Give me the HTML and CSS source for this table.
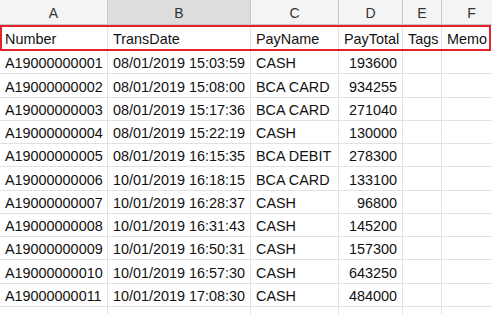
FILE: index.html
```html
<!DOCTYPE html>
<html>
<head>
<meta charset="utf-8">
<link rel="stylesheet" href="styles.css">
</head>
<body>
<div class="sheet">
  <div class="grid">
    <div class="ch">A</div><div class="ch sel">B</div><div class="ch">C</div><div class="ch">D</div><div class="ch">E</div><div class="ch">F</div>

    <div class="c r1">Number</div><div class="c r1">TransDate</div><div class="c r1">PayName</div><div class="c r1">PayTotal</div><div class="c r1">Tags</div><div class="c r1">Memo</div>

    <div class="c">A19000000001</div><div class="c">08/01/2019 15:03:59</div><div class="c">CASH</div><div class="c num">193600</div><div class="c"></div><div class="c"></div>
    <div class="c">A19000000002</div><div class="c">08/01/2019 15:08:00</div><div class="c">BCA CARD</div><div class="c num">934255</div><div class="c"></div><div class="c"></div>
    <div class="c">A19000000003</div><div class="c">08/01/2019 15:17:36</div><div class="c">BCA CARD</div><div class="c num">271040</div><div class="c"></div><div class="c"></div>
    <div class="c">A19000000004</div><div class="c">08/01/2019 15:22:19</div><div class="c">CASH</div><div class="c num">130000</div><div class="c"></div><div class="c"></div>
    <div class="c">A19000000005</div><div class="c">08/01/2019 16:15:35</div><div class="c">BCA DEBIT</div><div class="c num">278300</div><div class="c"></div><div class="c"></div>
    <div class="c">A19000000006</div><div class="c">10/01/2019 16:18:15</div><div class="c">BCA CARD</div><div class="c num">133100</div><div class="c"></div><div class="c"></div>
    <div class="c">A19000000007</div><div class="c">10/01/2019 16:28:37</div><div class="c">CASH</div><div class="c num">96800</div><div class="c"></div><div class="c"></div>
    <div class="c">A19000000008</div><div class="c">10/01/2019 16:31:43</div><div class="c">CASH</div><div class="c num">145200</div><div class="c"></div><div class="c"></div>
    <div class="c">A19000000009</div><div class="c">10/01/2019 16:50:31</div><div class="c">CASH</div><div class="c num">157300</div><div class="c"></div><div class="c"></div>
    <div class="c">A19000000010</div><div class="c">10/01/2019 16:57:30</div><div class="c">CASH</div><div class="c num">643250</div><div class="c"></div><div class="c"></div>
    <div class="c">A19000000011</div><div class="c">10/01/2019 17:08:30</div><div class="c">CASH</div><div class="c num">484000</div><div class="c"></div><div class="c"></div>
    <div class="c"></div><div class="c"></div><div class="c"></div><div class="c"></div><div class="c"></div><div class="c"></div>
  </div>
  <div class="hl"></div>
</div>
</body>
</html>
```
FILE: styles.css
```css
html, body {
  margin: 0;
  padding: 0;
  background: #fff;
  overflow: hidden;
}
.sheet {
  position: relative;
  width: 492px;
  height: 314px;
  overflow: hidden;
  font-family: "Liberation Sans", Arial, sans-serif;
  font-size: 14.4px;
  color: #111;
}
.grid {
  display: grid;
  grid-template-columns: 108px 143px 88px 64px 39px 60px;
  grid-template-rows: 25px 26px repeat(12, 23.27px);
}
.ch {
  box-sizing: border-box;
  background: #f4f4f4;
  border-right: 1px solid #c8c8c8;
  border-bottom: 1px solid #c8c8c8;
  display: flex;
  align-items: center;
  justify-content: center;
  color: #333;
  font-size: 14px;
  padding-top: 1px;
}
.ch.sel {
  background: #dddddd;
}
.c {
  box-sizing: border-box;
  border-right: 1px solid #e2e2e2;
  border-bottom: 1px solid #e2e2e2;
  display: flex;
  align-items: flex-end;
  padding: 0 4px 1px 5px;
  line-height: 17px;
  white-space: nowrap;
  overflow: hidden;
}
.c.num {
  justify-content: flex-end;
  padding-right: 5px;
}
.c.r1 {
  padding-bottom: 2px;
}
.hl {
  position: absolute;
  left: 0;
  top: 25px;
  width: 491px;
  height: 26px;
  box-sizing: border-box;
  border: 2px solid #e3222b;
}
```
